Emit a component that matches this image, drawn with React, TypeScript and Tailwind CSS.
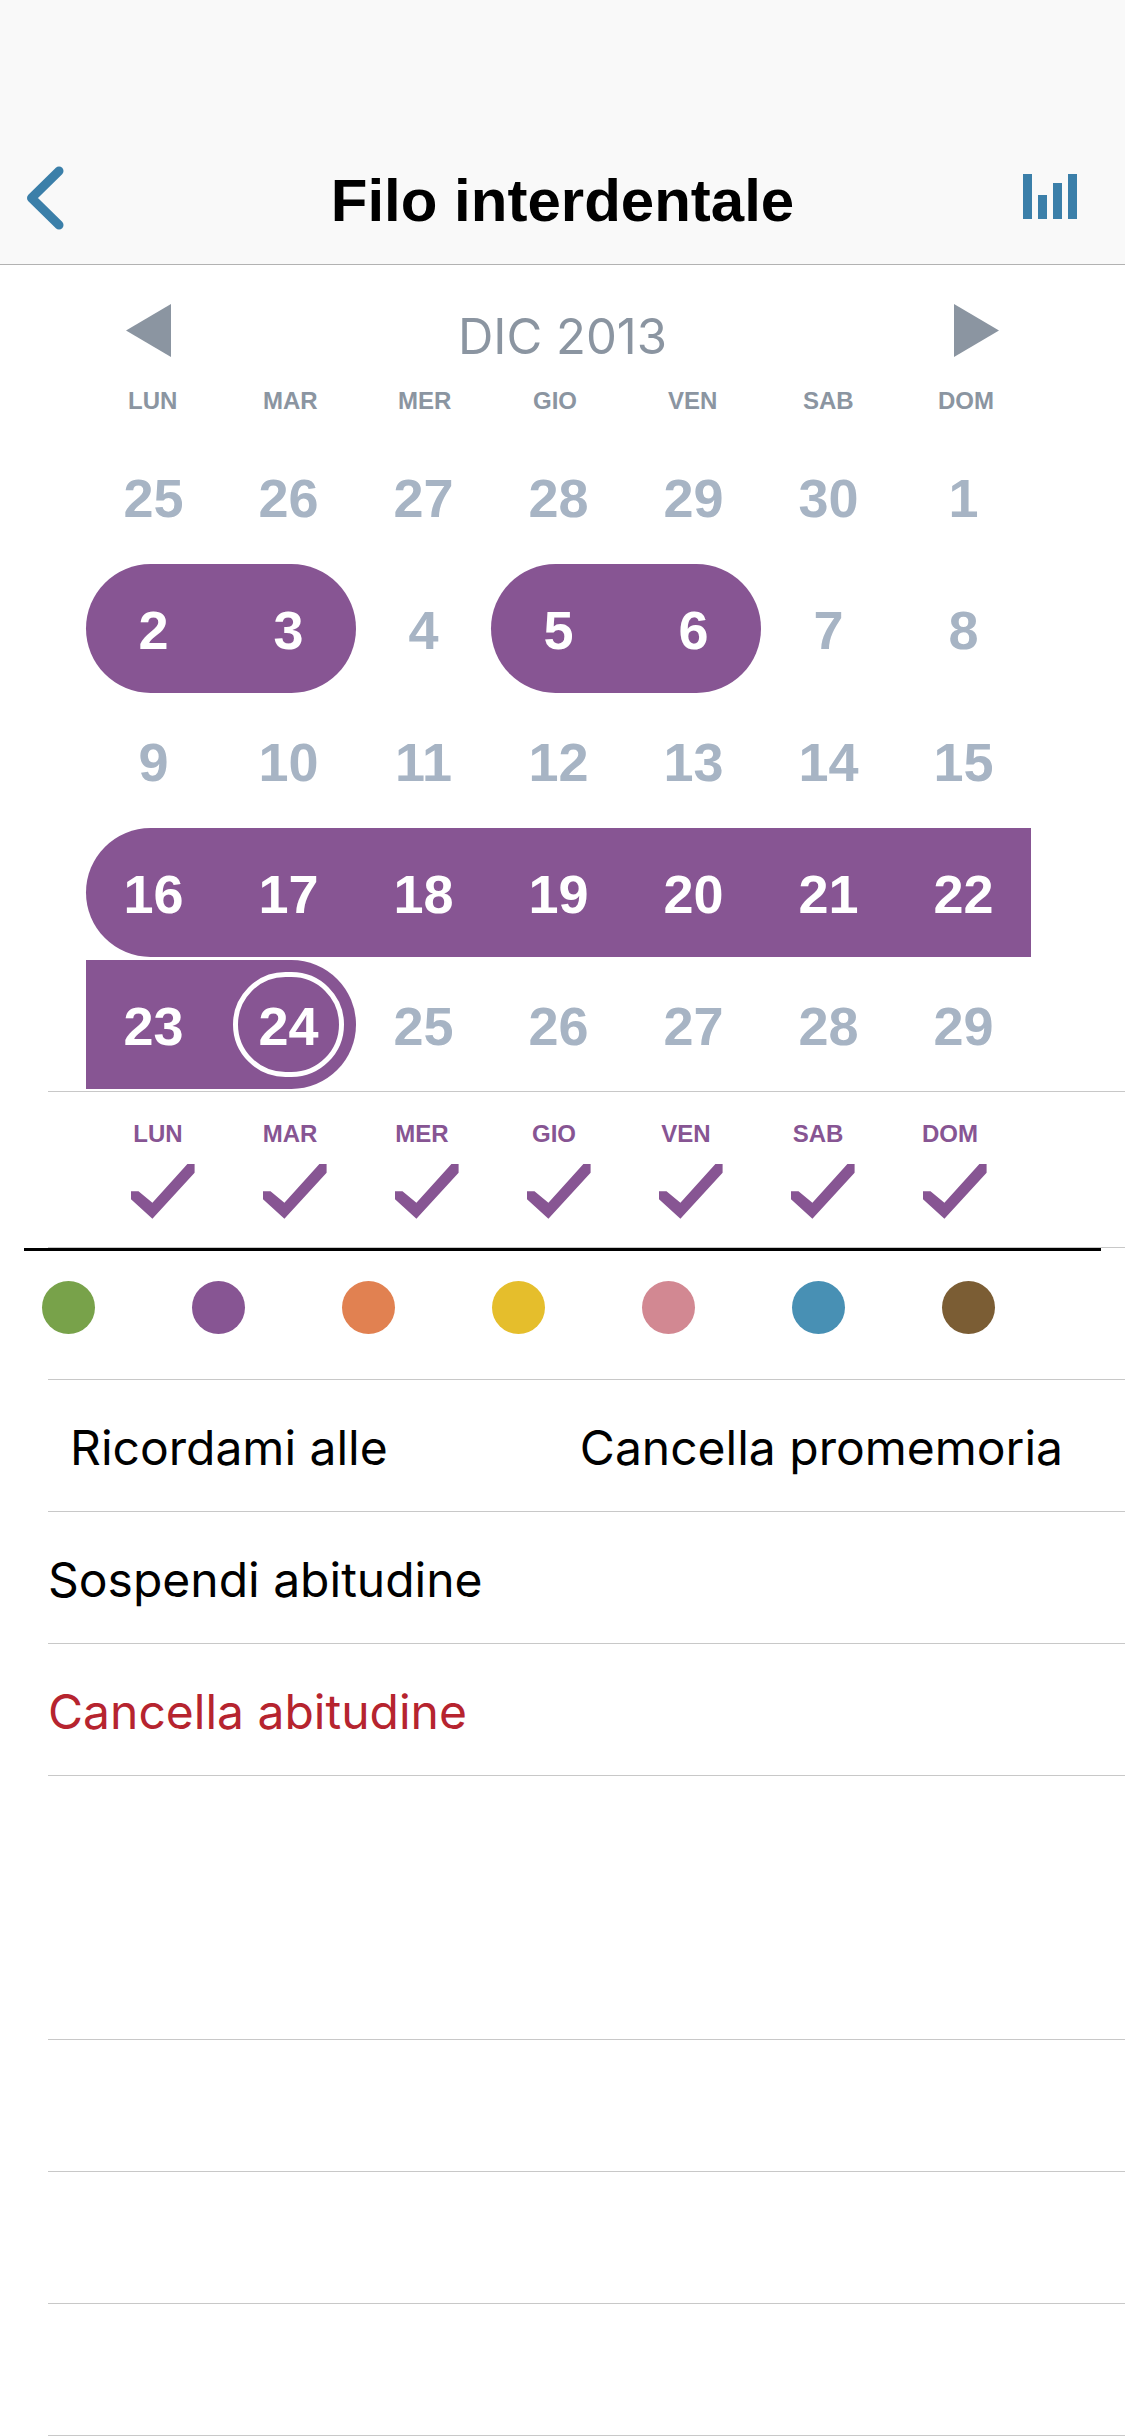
import { useState } from "react";

const DAYS = ["LUN", "MAR", "MER", "GIO", "VEN", "SAB", "DOM"];

type Shape = "none" | "start" | "middle" | "end";
type Day = { n: number; shape: Shape; today?: boolean };

const off = (n: number): Day => ({ n, shape: "none" });
const on = (n: number, shape: Shape, today = false): Day => ({ n, shape, today });

const WEEKS: Day[][] = [
  [off(25), off(26), off(27), off(28), off(29), off(30), off(1)],
  [on(2, "start"), on(3, "end"), off(4), on(5, "start"), on(6, "end"), off(7), off(8)],
  [off(9), off(10), off(11), off(12), off(13), off(14), off(15)],
  [
    on(16, "start"),
    on(17, "middle"),
    on(18, "middle"),
    on(19, "middle"),
    on(20, "middle"),
    on(21, "middle"),
    on(22, "middle"),
  ],
  [on(23, "middle"), on(24, "end", true), off(25), off(26), off(27), off(28), off(29)],
];

const SHAPES: Record<Shape, string> = {
  none: "text-[#a7b4c4]",
  start: "rounded-l-full bg-[#875593] text-white",
  middle: "bg-[#875593] text-white",
  end: "rounded-r-full bg-[#875593] text-white",
};

const COLORS = [
  { name: "Verde", className: "bg-[#78a24a]" },
  { name: "Viola", className: "bg-[#875593]" },
  { name: "Arancione", className: "bg-[#e18151]" },
  { name: "Giallo", className: "bg-[#e5be2c]" },
  { name: "Rosa", className: "bg-[#d28892]" },
  { name: "Blu", className: "bg-[#4890b4]" },
  { name: "Marrone", className: "bg-[#7b5d34]" },
];

function Header() {
  return (
    <header className="border-b border-[#b2b2b2] bg-[#f9f9f9] pt-[132px]">
      <div className="grid h-[132px] grid-cols-[1fr_auto_1fr] items-center">
        <button type="button" aria-label="Indietro" className="justify-self-start pl-[26px]">
          <svg width="38" height="64" viewBox="0 0 38 64" fill="none">
            <path
              d="M33 5 5.500 32 33 59"
              stroke="#3b7fa9"
              strokeWidth="9"
              strokeLinecap="round"
              strokeLinejoin="round"
            />
          </svg>
        </button>
        <h1 className="pt-[5px] text-[60px] leading-[72px] font-bold text-black">
          Filo interdentale
        </h1>
        <button type="button" aria-label="Statistiche" className="justify-self-end pr-12 pb-[3px]">
          <svg width="54" height="45" viewBox="0 0 54 45" fill="#3b7fa9">
            <rect x="0" y="0" width="9" height="45" />
            <rect x="15" y="21" width="9" height="24" />
            <rect x="30" y="9" width="9" height="36" />
            <rect x="45" y="0" width="9" height="45" />
          </svg>
        </button>
      </div>
    </header>
  );
}

function Calendar() {
  return (
    <section aria-label="Calendario">
      <div className="flex items-start justify-between px-[126px] pt-[39px]">
        <button type="button" aria-label="Mese precedente">
          <svg width="45" height="53" viewBox="0 0 45 53" fill="#8b95a1">
            <path d="M45 0v53L0 26.500z" />
          </svg>
        </button>
        <h2 className="font-[Inter,sans-serif] text-[49px] leading-[66px] font-normal text-[#8b95a1]">
          DIC 2013
        </h2>
        <button type="button" aria-label="Mese successivo">
          <svg width="45" height="53" viewBox="0 0 45 53" fill="#8b95a1">
            <path d="M0 0v53l45-26.500z" />
          </svg>
        </button>
      </div>
      <div className="pr-[94px] pl-[86px]">
        <table className="w-full table-fixed border-collapse">
          <thead>
            <tr className="h-[62px]">
              {DAYS.map((d) => (
                <th
                  key={d}
                  scope="col"
                  className="pl-[42px] text-left text-[24px] leading-[30px] font-bold text-[#8b95a1]"
                >
                  {d}
                </th>
              ))}
            </tr>
          </thead>
          <tbody>
            {WEEKS.map((week, i) => (
              <tr key={i}>
                {week.map((day) => (
                  <td key={day.n} className="p-0 pb-[3px]">
                    <button
                      type="button"
                      className={`relative flex h-[129px] w-full items-center justify-center pt-[3px] text-[54px] leading-[60px] font-bold ${SHAPES[day.shape]}`}
                    >
                      {day.n}
                      {day.today && (
                        <span className="absolute inset-3 rounded-full border-[5px] border-white" />
                      )}
                    </button>
                  </td>
                ))}
              </tr>
            ))}
          </tbody>
        </table>
      </div>
    </section>
  );
}

function Weekdays() {
  const [active, setActive] = useState<boolean[]>(DAYS.map(() => true));
  const toggle = (i: number) => setActive(active.map((v, k) => (k === i ? !v : v)));
  return (
    <fieldset className="-mt-px ml-12 border-y border-[#c8c8c8] pt-[27px] pb-[28px]">
      <div className="grid grid-cols-7 pr-[109px] pl-11">
        {DAYS.map((d, i) => (
          <label key={d} className="flex flex-col items-center gap-[15px]">
            <span className="text-[24px] leading-[30px] font-bold text-[#875593]">{d}</span>
            <input
              type="checkbox"
              className="sr-only"
              checked={active[i]}
              onChange={() => toggle(i)}
            />
            <svg width="74" height="55" viewBox="0 0 74 55" fill="#875593">
              {active[i] && (
                <path d="M10 27.300H17.500L31.400 38.700 66.400 0H73.600V8.700L31.400 54.700 10 35.300z" />
              )}
            </svg>
          </label>
        ))}
      </div>
    </fieldset>
  );
}

function ColorPicker() {
  return (
    <fieldset className="pt-[30px]">
      <div className="grid grid-cols-7 pr-[33px] pl-[42px]">
        {COLORS.map((c) => (
          <input
            key={c.name}
            type="radio"
            name="color"
            aria-label={c.name}
            defaultChecked={c.name === "Viola"}
            className={`size-[53px] appearance-none rounded-full ${c.className}`}
          />
        ))}
      </div>
      <div className="mt-[45px] ml-12 border-b border-[#c8c8c8]" />
    </fieldset>
  );
}

function Actions() {
  return (
    <ul className="ml-12 font-[Inter,sans-serif] text-[48px] leading-[60px] text-black">
      <li className="flex h-[132px] items-center justify-between border-b border-[#c8c8c8] pt-[5px] pr-[62px] pl-[22px]">
        <button type="button">Ricordami alle</button>
        <button type="button">Cancella promemoria</button>
      </li>
      <li className="flex h-[132px] items-center border-b border-[#c8c8c8] pt-[5px]">
        <button type="button">Sospendi abitudine</button>
      </li>
      <li className="flex h-[132px] items-center border-b border-[#c8c8c8] pt-[5px] text-[#b6242f]">
        <button type="button">Cancella abitudine</button>
      </li>
      <li className="h-[264px] border-b border-[#c8c8c8]" />
      <li className="h-[132px] border-b border-[#c8c8c8]" />
      <li className="h-[132px] border-b border-[#c8c8c8]" />
      <li className="h-[132px] border-b border-[#c8c8c8]" />
    </ul>
  );
}

export default function App() {
  return (
    <div className="min-h-screen bg-white font-['Liberation_Sans',Arial,sans-serif]">
      <Header />
      <main>
        <Calendar />
        <Weekdays />
        <div className="mx-6 h-[3px] bg-black" />
        <ColorPicker />
        <Actions />
      </main>
    </div>
  );
}
